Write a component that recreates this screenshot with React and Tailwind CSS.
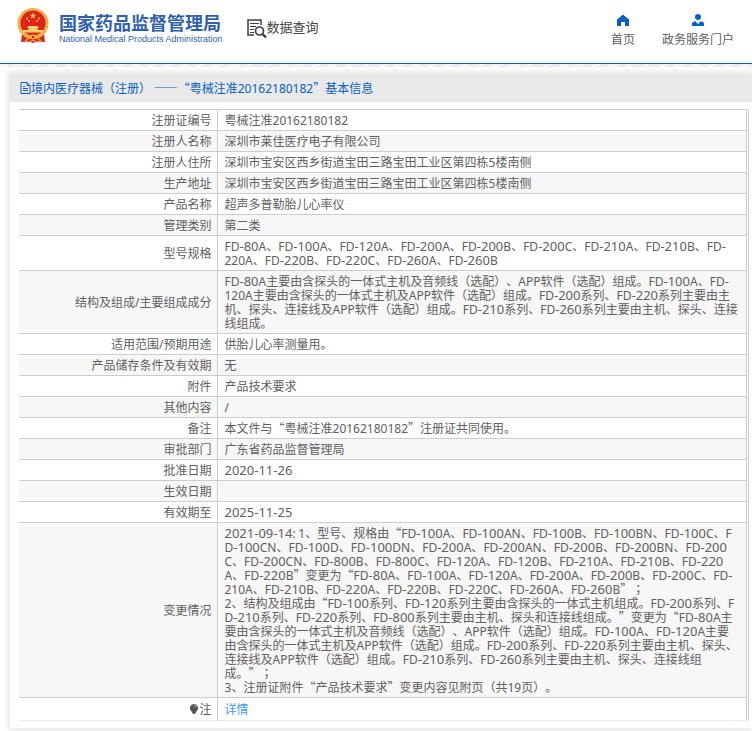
import React from "react";

const rows = [
  { label: "注册证编号", lines: ["粤械注准20162180182"] },
  { label: "注册人名称", lines: ["深圳市莱佳医疗电子有限公司"] },
  { label: "注册人住所", lines: ["深圳市宝安区西乡街道宝田三路宝田工业区第四栋5楼南侧"] },
  { label: "生产地址", lines: ["深圳市宝安区西乡街道宝田三路宝田工业区第四栋5楼南侧"] },
  { label: "产品名称", lines: ["超声多普勒胎儿心率仪"] },
  { label: "管理类别", lines: ["第二类"] },
  {
    label: "型号规格",
    lines: [
      "FD-80A、FD-100A、FD-120A、FD-200A、FD-200B、FD-200C、FD-210A、FD-210B、FD-",
      "220A、FD-220B、FD-220C、FD-260A、FD-260B",
    ],
  },
  {
    label: "结构及组成/主要组成成分",
    lines: [
      "FD-80A主要由含探头的一体式主机及音频线（选配）、APP软件（选配）组成。FD-100A、FD-",
      "120A主要由含探头的一体式主机及APP软件（选配）组成。FD-200系列、FD-220系列主要由主",
      "机、探头、连接线及APP软件（选配）组成。FD-210系列、FD-260系列主要由主机、探头、连接",
      "线组成。",
    ],
  },
  { label: "适用范围/预期用途", lines: ["供胎儿心率测量用。"] },
  { label: "产品储存条件及有效期", lines: ["无"] },
  { label: "附件", lines: ["产品技术要求"] },
  { label: "其他内容", lines: ["/"] },
  { label: "备注", lines: ["本文件与“粤械注准20162180182”注册证共同使用。"] },
  { label: "审批部门", lines: ["广东省药品监督管理局"] },
  { label: "批准日期", lines: ["2020-11-26"] },
  { label: "生效日期", lines: ["\u00a0"] },
  { label: "有效期至", lines: ["2025-11-25"] },
  {
    label: "变更情况",
    lines: [
      "2021-09-14: 1、型号、规格由“FD-100A、FD-100AN、FD-100B、FD-100BN、FD-100C、F",
      "D-100CN、FD-100D、FD-100DN、FD-200A、FD-200AN、FD-200B、FD-200BN、FD-200",
      "C、FD-200CN、FD-800B、FD-800C、FD-120A、FD-120B、FD-210A、FD-210B、FD-220",
      "A、FD-220B”变更为“FD-80A、FD-100A、FD-120A、FD-200A、FD-200B、FD-200C、FD-",
      "210A、FD-210B、FD-220A、FD-220B、FD-220C、FD-260A、FD-260B”；",
      "2、结构及组成由“FD-100系列、FD-120系列主要由含探头的一体式主机组成。FD-200系列、F",
      "D-210系列、FD-220系列、FD-800系列主要由主机、探头和连接线组成。”变更为“FD-80A主",
      "要由含探头的一体式主机及音频线（选配）、APP软件（选配）组成。FD-100A、FD-120A主要",
      "由含探头的一体式主机及APP软件（选配）组成。FD-200系列、FD-220系列主要由主机、探头、",
      "连接线及APP软件（选配）组成。FD-210系列、FD-260系列主要由主机、探头、连接线组",
      "成。”；",
      "3、注册证附件“产品技术要求”变更内容见附页（共19页）。",
    ],
  },
];

// Latin runs use Noto Sans; hyphenated numbers in codes and dates are one size larger.
function Mixed({ text }) {
  return text.split(/(-[\d-]+|\d+-[\d-]+|-|[\x21-\x2c\x2e-\x7e]+|；)/).map((part, i) => {
    if (part === "；") return <span key={i} lang="zh-TW" className="font-['Noto_Sans_CJK_TC',sans-serif]">{part}</span>;
    if (i % 2 === 0) return part;
    return (
      <span key={i} className={part.includes("-") ? "font-['Noto_Sans',sans-serif] text-[13px]" : "font-['Noto_Sans',sans-serif]"}>
        {part}
      </span>
    );
  });
}

function Emblem() {
  return (
    <svg viewBox="0 0 32 35" className="h-[35px] w-8 shrink-0" aria-hidden="true">
      <path d="M5 26 L4 34 L11 33.500 L16 35 L21 33.500 L28 34 L27 26Z" fill="#d9251c" />
      <circle cx="16" cy="15.500" r="15.500" fill="#e9ab3e" />
      <circle cx="16" cy="15.500" r="14" fill="none" stroke="#f6d178" strokeWidth="1" strokeDasharray="2 1.500" />
      <circle cx="16" cy="15" r="12.500" fill="#e2231a" />
      <path d="M16 4.500l.9 2.300h2.400l-1.900 1.500.7 2.400-2.100-1.400-2.100 1.400.7-2.400-1.900-1.500h2.400z" fill="#f7cf52" />
      <g fill="#f7cf52">
        <circle cx="10" cy="10.500" r="1" />
        <circle cx="12" cy="13" r="1" />
        <circle cx="20" cy="13" r="1" />
        <circle cx="22" cy="10.500" r="1" />
      </g>
      <path d="M11.500 18h9l1.500 2h-1.500v2H26v2.500H6V22h5.500v-2H10z" fill="#f5d06a" />
      <path d="M8 27q8 3 16 0v2l-4 2-4-1-4 1-4-2z" fill="#e8a93a" />
      <circle cx="16" cy="29" r="2" fill="#d9251c" stroke="#f5d06a" />
      <path d="M8 33l3-2M24 33l-3-2M13 33.500l3-1 3 1" fill="none" stroke="#f0b23d" strokeWidth="1.200" />
    </svg>
  );
}

function QueryIcon() {
  return (
    <svg viewBox="0 0 20 20" className="h-5 w-5 shrink-0" fill="none" stroke="#3d3c4a" aria-hidden="true">
      <path d="M7 16H1V1h13v5" strokeWidth="1.500" />
      <path d="M3 4.500h9M3 7.500h6M3 10.500h4M3 13.500h4" strokeWidth="1.200" />
      <circle cx="12.500" cy="12" r="4" strokeWidth="1.700" />
      <path d="M15.500 15l3.500 3.500" strokeWidth="2.400" />
    </svg>
  );
}

const labelCell = "w-[198px] border-r border-[#ccc] py-[3px] pr-[5px] text-right font-normal";

export default function App() {
  return (
    <div lang="zh-CN" className="overflow-hidden bg-white pb-1 font-['Noto_Sans_CJK_SC',sans-serif] text-xs leading-[14px] text-[#606060] [text-spacing-trim:space-all]">
      <header className="flex h-16 items-start border-b border-[#0b5fb5] pt-2 pr-[18px] pl-[17px]">
        <a href="#" className="flex items-start gap-[10px]">
          <Emblem />
          <span className="flex flex-col pt-[3px] text-[#2f5fae]">
            <span className="text-lg leading-[23px] font-bold whitespace-nowrap">国家药品监督管理局</span>
            <span className="font-['Liberation_Sans',sans-serif] text-[9px] leading-[10px] whitespace-nowrap">National Medical Products Administration</span>
          </span>
        </a>
        <a href="#" className="ml-6 flex items-start pt-[11px] text-[#444]">
          <QueryIcon />
          <span className="text-[13px] leading-4">数据查询</span>
        </a>
        <nav className="ml-auto flex gap-[27px] pt-[6px]">
          <a href="#" className="flex flex-col items-center gap-[3px]">
            <svg viewBox="0 0 12 12" className="h-3 w-3" aria-hidden="true">
              <path d="M6 .5L0 5.500V12h4V8h4v4h4V5.500z" fill="#0a60c2" />
            </svg>
            <span className="leading-5">首页</span>
          </a>
          <a href="#" className="flex flex-col items-center gap-[3px]">
            <svg viewBox="0 0 12 12" className="h-3 w-3" aria-hidden="true">
              <circle cx="6" cy="3" r="3" fill="#0a60c2" />
              <path d="M0 12V9l3-2 3 3 3-3 3 2v3z" fill="#0a60c2" />
            </svg>
            <span className="leading-5">政务服务门户</span>
          </a>
        </nav>
      </header>
      <div className="h-[3px] bg-[repeating-linear-gradient(135deg,#fff_0_1px,#e2e2e2_1px_2px)]" />
      <main className="mt-[7px] ml-[10px] bg-white pb-[7px] shadow-[0_0_6px_2px_#e4e4e4]">
        <h1 className="flex h-7 items-center bg-[#e9e9e9] pl-[10px] text-[#0a5fbd]">
          <svg viewBox="0 0 11 12" className="h-3 w-[11px]" fill="none" stroke="#0a5fbd" aria-hidden="true">
            <path d="M1 .5h6l3 3v8H1zM7 .5v3h3M3 4.500h2M3 6.500h5M3 8.500h5" />
          </svg>
          <span className="leading-5 whitespace-pre">
            <Mixed text="境内医疗器械（注册） ——“粤械注准20162180182”基本信息" />
          </span>
        </h1>
        <div className="mt-[7px] mr-[3px] ml-[9px] border-r border-[#ccc] pr-px">
          <table className="w-full table-fixed border-collapse border-t border-r border-[#ccc]">
            <tbody>
              {rows.map((row) => (
                <tr key={row.label} className="border-b border-[#ccc] odd:bg-white even:bg-[#f7f7f7] first:bg-[#f8f9fb]">
                  <th scope="row" className={labelCell}>
                    <span className="block h-[14px]">
                      <Mixed text={row.label} />
                    </span>
                  </th>
                  <td className="py-[3px] pl-[7px] whitespace-nowrap">
                    {row.lines.map((line, i) => (
                      <span key={i} className="block h-[14px]">
                        <Mixed text={line} />
                      </span>
                    ))}
                  </td>
                </tr>
              ))}
              <tr className="h-[23px] border-b border-[#e6eaf5]">
                <th scope="row" className={labelCell}>
                  <span className="flex items-center justify-end">
                    <svg viewBox="0 0 10 12" className="h-3 w-[10px]" aria-hidden="true">
                      <path d="M5 1a4 4 0 0 0-2.500 7.200L4 11h2l1.500-2.800A4 4 0 0 0 5 1z" fill="#555" />
                      <path d="M5.500 2.500q1.500.3 1.700 1.700" fill="none" stroke="#ddd" />
                    </svg>
                    注
                  </span>
                </th>
                <td className="py-[3px] pl-[7px]">
                  <a href="#" className="text-[#3c96f5]">详情</a>
                </td>
              </tr>
            </tbody>
          </table>
        </div>
      </main>
    </div>
  );
}
